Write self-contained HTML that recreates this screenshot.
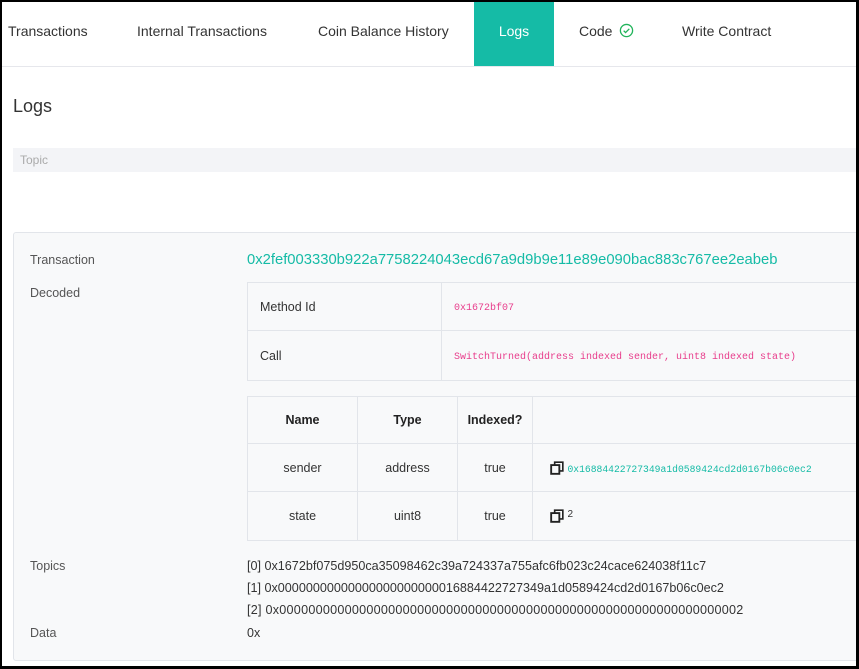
<!DOCTYPE html>
<html><head><style>
*{margin:0;padding:0;box-sizing:border-box}
html,body{width:859px;height:669px;overflow:hidden;background:#000}
body{font-family:"Liberation Sans",sans-serif;color:#333}
.page{position:absolute;left:2px;top:2px;width:854px;height:664px;background:#fff;overflow:hidden}
.abs{position:absolute;white-space:nowrap}
.tab{position:absolute;top:0;height:64px;line-height:58px;font-size:14px;color:#333}
.mono{font-family:"Liberation Mono",monospace}
table{border-collapse:collapse;position:absolute}
td{border:1px solid #e2e5ea;font-size:12.5px}
</style></head><body>
<div class="page">
  <div style="position:absolute;left:0;top:64px;width:854px;height:1px;background:#e6e7ec"></div>
  <div class="tab" style="left:6px">Transactions</div>
  <div class="tab" style="left:135px">Internal Transactions</div>
  <div class="tab" style="left:316px">Coin Balance History</div>
  <div class="tab" style="left:472px;width:80px;background:#15bba6;color:#fff;text-align:center">Logs</div>
  <div class="tab" style="left:577px">Code <svg width="15" height="15" viewBox="0 0 16 16" style="vertical-align:-2px;margin-left:3px"><circle cx="8" cy="8" r="6.5" fill="none" stroke="#20b35a" stroke-width="1.4"/><path d="M5 8.2l2 2 4-4" fill="none" stroke="#20b35a" stroke-width="1.4"/></svg></div>
  <div class="tab" style="left:680px">Write Contract</div>

  <div class="abs" style="left:11px;top:94px;font-size:18px;color:#333">Logs</div>
  <div class="abs" style="left:11px;top:146px;width:850px;height:24px;background:#f3f4f7;font-size:12px;color:#aaa;line-height:24px;padding-left:7px">Topic</div>

  <div style="position:absolute;left:11px;top:230px;width:860px;height:429px;background:#f8f9fa;border:1px solid #e2e5ea;border-radius:3px"></div>
  <div class="abs" style="left:28px;top:251px;font-size:12.5px;color:#555">Transaction</div>
  <div class="abs" style="left:245px;top:250px;font-size:14.8px;color:#15bba6">0x2fef003330b922a7758224043ecd67a9d9b9e11e89e090bac883c767ee2eabeb</div>
  <div class="abs" style="left:28px;top:284px;font-size:12.5px;color:#555">Decoded</div>

  <table style="left:245px;top:280px;width:620px">
    <tr style="height:48px"><td style="width:194px;padding-left:12px">Method Id</td><td style="padding-left:12px" class="mono"><span style="color:#e83e8c;font-size:10px">0x1672bf07</span></td></tr>
    <tr style="height:50px"><td style="padding-left:12px">Call</td><td style="padding-left:12px"><span class="mono" style="color:#e83e8c;font-size:10px">SwitchTurned(address indexed sender, uint8 indexed state)</span></td></tr>
  </table>

  <table style="left:245px;top:394px;width:620px;text-align:center">
    <tr style="height:47px"><td style="width:110px;font-weight:bold;color:#222">Name</td><td style="width:100px;font-weight:bold;color:#222">Type</td><td style="width:75px;font-weight:bold;color:#222">Indexed?</td><td></td></tr>
    <tr style="height:48px"><td>sender</td><td>address</td><td>true</td><td style="text-align:left;padding-left:17px"><svg width="14" height="14" viewBox="0 0 12 12" style="vertical-align:-3px"><rect x="1" y="3.5" width="7" height="7.5" fill="none" stroke="#222" stroke-width="1.6"/><path d="M4 3.5V1h7v7.5H8" fill="none" stroke="#222" stroke-width="1.4"/></svg> <span class="mono" style="color:#15bba6;font-size:9.7px">0x16884422727349a1d0589424cd2d0167b06c0ec2</span></td></tr>
    <tr style="height:49px"><td>state</td><td>uint8</td><td>true</td><td style="text-align:left;padding-left:17px"><svg width="14" height="14" viewBox="0 0 12 12" style="vertical-align:-3px"><rect x="1" y="3.5" width="7" height="7.5" fill="none" stroke="#222" stroke-width="1.6"/><path d="M4 3.5V1h7v7.5H8" fill="none" stroke="#222" stroke-width="1.4"/></svg> <span style="font-size:10px;vertical-align:3px">2</span></td></tr>
  </table>

  <div class="abs" style="left:28px;top:557px;font-size:12.5px;color:#555">Topics</div>
  <div class="abs" style="left:245px;top:557px;font-size:12.6px">[0] 0x1672bf075d950ca35098462c39a724337a755afc6fb023c24cace624038f11c7</div>
  <div class="abs" style="left:245px;top:579px;font-size:12.6px">[1] 0x00000000000000000000000016884422727349a1d0589424cd2d0167b06c0ec2</div>
  <div class="abs" style="left:245px;top:601px;font-size:12.6px;letter-spacing:0.25px">[2] 0x0000000000000000000000000000000000000000000000000000000000000002</div>
  <div class="abs" style="left:28px;top:624px;font-size:12.5px;color:#555">Data</div>
  <div class="abs" style="left:245px;top:624px;font-size:12.5px">0x</div>
</div>
</body></html>
